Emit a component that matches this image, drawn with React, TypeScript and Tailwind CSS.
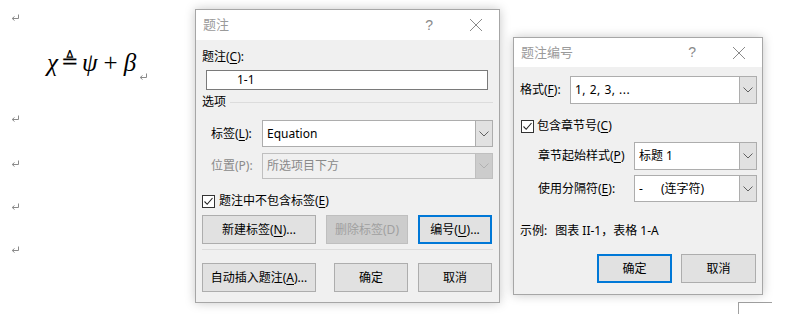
import React from "react";

const font = { fontFamily: '"Noto Sans", "Noto Sans CJK SC", sans-serif' };

function U({ children }: { children: React.ReactNode }) {
  return <span className="underline underline-offset-2">{children}</span>;
}

function Chevron({ dim }: { dim?: boolean }) {
  return (
    <svg width="10" height="6" viewBox="0 0 10 6" fill="none">
      <path d="M0.5 0.5 L5 5 L9.5 0.5" stroke={dim ? "#b0b0b0" : "#606060"} strokeWidth="1" />
    </svg>
  );
}

function Combo({ value, w, h = 27, disabled }: { value: React.ReactNode; w: number; h?: number; disabled?: boolean }) {
  return (
    <div
      className={`flex border ${disabled ? "border-[#bfbfbf] bg-[#f0f0f0] text-[#8a8a8a]" : "border-[#adadad] bg-white text-black"}`}
      style={{ width: w, height: h }}
    >
      <div className="flex-1 flex items-center pl-[4px] whitespace-nowrap">{value}</div>
      <div className={`w-[17px] flex items-center justify-center border-l ${disabled ? "border-[#bfbfbf] bg-[#cccccc]" : "border-[#adadad] bg-[#e1e1e1]"}`}>
        <Chevron dim={disabled} />
      </div>
    </div>
  );
}

function Btn({ children, w, primary, disabled }: { children: React.ReactNode; w: number; primary?: boolean; disabled?: boolean }) {
  let cls = "border border-[#adadad] bg-[#e1e1e1] text-black";
  if (primary) cls = "border-2 border-[#0078d7] bg-[#e1e1e1] text-black";
  if (disabled) cls = "border border-[#bfbfbf] bg-[#cccccc] text-[#a0a0a0]";
  return (
    <div className={`h-[29px] flex items-center justify-center whitespace-nowrap ${cls}`} style={{ width: w }}>
      {children}
    </div>
  );
}

function Check() {
  return (
    <div className="w-[13px] h-[13px] border border-[#333] bg-white flex items-center justify-center">
      <svg width="11" height="11" viewBox="0 0 11 11" fill="none">
        <path d="M1.5 5.5 L4.2 8.3 L9.5 2" stroke="#222" strokeWidth="1.1" />
      </svg>
    </div>
  );
}

function TitleBar({ title, h }: { title: string; h: number }) {
  return (
    <div className="bg-white flex items-center" style={{ height: h }}>
      <span className="ml-[7px] flex-1 text-[#9a9a9a] text-[13px]">{title}</span>
      <span className="text-[#8a8a8a] text-[14px] mr-[36px]" style={{ fontFamily: '"Liberation Sans", sans-serif' }}>?</span>
      <svg width="14" height="14" viewBox="0 0 14 14" className="mr-[16px]">
        <path d="M1 1 L13 13 M13 1 L1 13" stroke="#8a8a8a" strokeWidth="1" />
      </svg>
    </div>
  );
}

function Mark() {
  return (
    <svg width="9" height="8" viewBox="0 0 9 8" fill="none">
      <path d="M7.5 0.5 V4.5 H1.5" stroke="#8a8a8a" strokeWidth="1" />
      <path d="M3.5 2.5 L1.2 4.5 L3.5 6.5" stroke="#8a8a8a" strokeWidth="1" />
    </svg>
  );
}

function CaptionDialog() {
  return (
    <div
      className="absolute left-[195px] top-[9px] w-[305px] h-[294px] border border-[#a6a6a6] bg-[#f0f0f0] shadow-[0_0_10px_rgba(0,0,0,0.22)] text-[12px] flex flex-col"
      style={font}
    >
      <TitleBar title="题注" h={30} />
      <div className="pl-[6px] mt-[9px] h-[16px] leading-[16px]">题注(<U>C</U>):</div>
      <div className="ml-[10px] mt-[5px] w-[282px] h-[20px] border border-[#7a7a7a] bg-white flex items-center pl-[30px]">1-1</div>
      <div className="mt-[4px] h-[16px] flex items-center pl-[6px]">
        <span>选项</span>
        <div className="flex-1 h-px bg-[#dcdcdc] ml-[4px] mr-[6px]" />
      </div>
      <div className="mt-[10px] flex items-center">
        <span className="w-[66px] pl-[15px]">标签(<U>L</U>):</span>
        <Combo value="Equation" w={231} h={27} />
      </div>
      <div className="mt-[6px] flex items-center">
        <span className="w-[66px] pl-[15px] text-[#8a8a8a]">位置(P):</span>
        <Combo value="所选项目下方" w={231} h={26} disabled />
      </div>
      <div className="mt-[14px] flex items-center pl-[6px] h-[16px]">
        <Check />
        <span className="ml-[4px]">题注中不包含标签(<U>E</U>)</span>
      </div>
      <div className="mt-[6px] flex pl-[6px]">
        <Btn w={114}>新建标签(<U>N</U>)...</Btn>
        <div className="w-[10px]" />
        <Btn w={82} disabled>删除标签(D)</Btn>
        <div className="w-[10px]" />
        <Btn w={74} primary>编号(<U>U</U>)...</Btn>
      </div>
      <div className="mt-[5px] ml-[6px] w-[291px] h-px bg-[#dcdcdc]" />
      <div className="mt-[13px] flex pl-[6px]">
        <Btn w={114}>自动插入题注(<U>A</U>)...</Btn>
        <div className="w-[18px]" />
        <Btn w={74}>确定</Btn>
        <div className="w-[10px]" />
        <Btn w={74}>取消</Btn>
      </div>
    </div>
  );
}

function NumberingDialog() {
  return (
    <div
      className="absolute left-[513px] top-[37px] w-[250px] h-[258px] border border-[#a6a6a6] bg-[#f0f0f0] shadow-[0_0_10px_rgba(0,0,0,0.22)] text-[12px] flex flex-col"
      style={font}
    >
      <TitleBar title="题注编号" h={29} />
      <div className="mt-[9px] flex items-center">
        <span className="w-[56px] pl-[6px]">格式(<U>F</U>):</span>
        <Combo value={<span className="tracking-[0.5px]">1, 2, 3, ...</span>} w={187} h={28} />
      </div>
      <div className="mt-[14px] flex items-center pl-[7px] h-[16px]">
        <Check />
        <span className="ml-[3px]">包含章节号(<U>C</U>)</span>
      </div>
      <div className="mt-[8px] flex items-center">
        <span className="w-[120px] pl-[24px]">章节起始样式(<U>P</U>)</span>
        <Combo value="标题 1" w={123} h={28} />
      </div>
      <div className="mt-[5px] flex items-center">
        <span className="w-[120px] pl-[24px]">使用分隔符(<U>E</U>):</span>
        <Combo value={<span>-<span className="ml-[18px]">(连字符)</span></span>} w={123} h={27} />
      </div>
      <div className="mt-[21px] pl-[6px] h-[16px] leading-[16px]">
        示例:<span className="ml-[8px]">图表 II-1，表格 1-A</span>
      </div>
      <div className="mt-[15px] flex pl-[83px]">
        <Btn w={75} primary>确定</Btn>
        <div className="w-[9px]" />
        <Btn w={75}>取消</Btn>
      </div>
    </div>
  );
}

export default function App() {
  return (
    <div className="relative w-[802px] h-[314px] bg-white overflow-hidden">
      <div className="absolute left-[11px] top-[14px]"><Mark /></div>
      <div
        className="absolute left-[47px] top-[50px] flex items-end text-[25px] italic text-black leading-none"
        style={{ fontFamily: '"Liberation Serif", "DejaVu Serif", serif' }}
      >
        <span>χ</span>
        <span className="not-italic mx-[3px] text-[21px] relative top-[-3px]" style={{ fontFamily: '"DejaVu Serif", serif' }}>≜</span>
        <span>ψ</span>
        <span className="not-italic mx-[6px]">+</span>
        <span>β</span>
        <span className="ml-[3px] mb-[-6px]"><Mark /></span>
      </div>
      <div className="absolute left-[11px] top-[115px]"><Mark /></div>
      <div className="absolute left-[11px] top-[160px]"><Mark /></div>
      <div className="absolute left-[11px] top-[203px]"><Mark /></div>
      <div className="absolute left-[11px] top-[246px]"><Mark /></div>
      <div className="absolute left-[738px] top-[302px] w-[34px] h-[20px] border-l border-t border-[#a0a0a0]" />
      <CaptionDialog />
      <NumberingDialog />
    </div>
  );
}
